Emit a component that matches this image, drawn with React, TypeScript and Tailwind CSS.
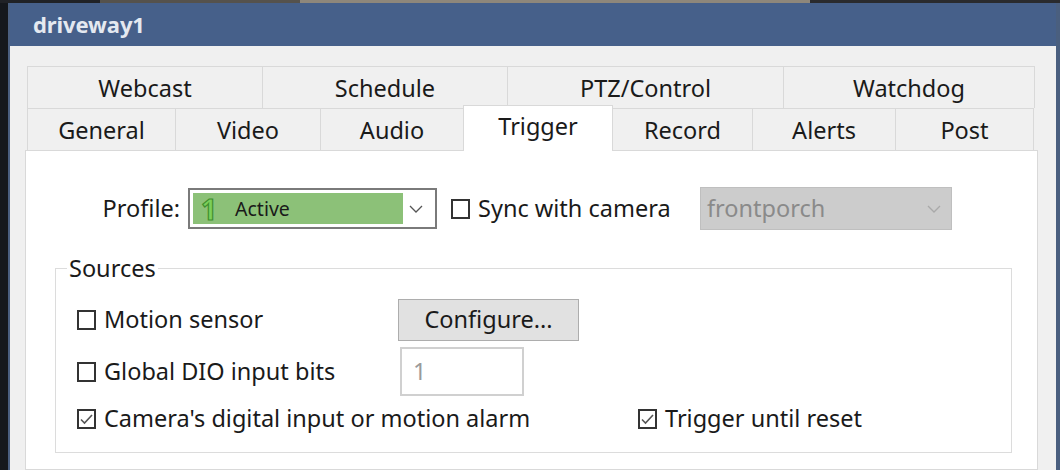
import React from "react";

const FONT = { fontFamily: '"Noto Sans", "Open Sans", sans-serif' };

function Check({ checked }: { checked?: boolean }) {
  return (
    <div className="w-[19px] h-[20px] border-2 border-[#333333] bg-white flex items-center justify-center shrink-0">
      {checked && (
        <svg width="15" height="15" viewBox="0 0 15 15">
          <polyline points="2,7.5 5.5,11 13,3" fill="none" stroke="#555555" strokeWidth="1.6" />
        </svg>
      )}
    </div>
  );
}

function Chevron({ color }: { color: string }) {
  return (
    <svg width="14" height="8" viewBox="0 0 14 8">
      <polyline points="1,1 7,7 13,1" fill="none" stroke={color} strokeWidth="1.3" />
    </svg>
  );
}

const row1 = [
  { label: "Webcast", w: "w-[235px]" },
  { label: "Schedule", w: "w-[245px]" },
  { label: "PTZ/Control", w: "w-[276px]" },
  { label: "Watchdog", w: "w-[252px]" },
];

export default function App() {
  return (
    <div className="w-[1060px] h-[470px] overflow-hidden bg-[#1a1d21] flex flex-col text-[#1a1a1a]" style={FONT}>
      <div className="h-[3px] flex shrink-0">
        <div className="w-[100px] bg-[#202226]" />
        <div className="w-[200px] bg-[#55524d]" />
        <div className="w-[510px] bg-[#8e877b]" />
        <div className="flex-1 bg-[#2a2b2e]" />
      </div>
      <div className="flex flex-1 min-h-0">
        <div className="w-[8px] bg-[#15181c] shrink-0" />
        <div className="flex-1 flex flex-col border-l-2 border-r-4 border-[#4a5f7f] bg-[#f0f0f0] min-w-0">
          <div className="h-[43px] bg-[#46608a] pl-[23px] flex items-center shrink-0">
            <span className="text-[22px] font-bold text-[#e4e9f0] leading-none pb-[1px] tracking-[-0.1px]">driveway1</span>
          </div>
          <div className="flex-1 flex flex-col pt-[20px] pl-[15px] min-h-0">
            {/* tabs */}
            <div className="ml-[2px] flex flex-col text-[23.5px] shrink-0">
              <div className="flex h-[42px]">
                {row1.map((t, i) => (
                  <div
                    key={t.label}
                    className={`${t.w} border-t border-l border-[#d9d9d9] flex items-center justify-center pt-[3px] ${i === row1.length - 1 ? "border-r" : ""}`}
                  >
                    {t.label}
                  </div>
                ))}
              </div>
              <div className="flex h-[42px] items-end">
                <div className="w-[148px] h-[42px] border-t border-l border-[#d9d9d9] flex items-center justify-center pt-[3px]">General</div>
                <div className="w-[145px] h-[42px] border-t border-l border-[#d9d9d9] flex items-center justify-center pt-[3px]">Video</div>
                <div className="w-[143px] h-[42px] border-t border-l border-[#d9d9d9] flex items-center justify-center pt-[3px]">Audio</div>
                <div className="w-[150px] h-[46px] -mb-[1px] relative z-10 bg-white border-t border-x border-[#d9d9d9] flex items-center justify-center pb-[3px]">Trigger</div>
                <div className="w-[139px] h-[42px] border-t border-[#d9d9d9] flex items-center justify-center pt-[3px]">Record</div>
                <div className="w-[143px] h-[42px] border-t border-l border-[#d9d9d9] flex items-center justify-center pt-[3px]">Alerts</div>
                <div className="w-[139px] h-[42px] border-t border-x border-[#d9d9d9] flex items-center justify-center pt-[3px]">Post</div>
              </div>
            </div>
            {/* panel */}
            <div className="w-[1013px] flex-1 bg-white border border-[#d9d9d9] flex flex-col text-[23.5px]">
              <div className="flex items-center h-[43px] mt-[36px] pl-[62px]">
                <div className="w-[92px] text-right mr-[8px]">Profile:</div>
                <div className="w-[249px] h-[41px] border-2 border-[#7a7a7a] bg-white flex items-center pl-[3px] pr-[7px]">
                  <div className="w-[210px] h-[31px] bg-[#8cc178] flex items-center pl-[8px]">
                    <span className="text-[28px] font-bold leading-none text-[#7ccf5a] [-webkit-text-stroke:1.2px_#3f8f2f]">1</span>
                    <span className="ml-[18px] text-[19.5px] leading-none">Active</span>
                  </div>
                  <div className="flex-1 flex justify-center">
                    <Chevron color="#555555" />
                  </div>
                </div>
                <div className="w-[263px] flex items-center pl-[14px]">
                  <Check />
                  <span className="ml-[8px]">Sync with camera</span>
                </div>
                <div className="w-[252px] h-[43px] bg-[#cccccc] border border-[#bfbfbf] flex items-center pl-[6px] pr-[10px]">
                  <span className="flex-1 text-[#8a8a8a]">frontporch</span>
                  <Chevron color="#a9a9a9" />
                </div>
              </div>
              <fieldset className="ml-[29px] w-[957px] mt-[24px] border border-[#dcdcdc] pl-[21px] pt-[17px] pb-[13px]">
                <legend className="-ml-[10px] px-[2px] leading-[28px]">Sources</legend>
                <div className="flex items-center h-[42px]">
                  <div className="w-[321px] flex items-center">
                    <Check />
                    <span className="ml-[8px]">Motion sensor</span>
                  </div>
                  <div className="w-[181px] h-[42px] bg-[#e1e1e1] border border-[#adadad] flex items-center justify-center">Configure...</div>
                </div>
                <div className="flex items-center h-[49px] mt-[6px]">
                  <div className="w-[323px] flex items-center">
                    <Check />
                    <span className="ml-[8px]">Global DIO input bits</span>
                  </div>
                  <div className="w-[124px] h-[49px] bg-white border-2 border-[#d0d0d0] flex items-center pl-[11px] text-[#9a9a9a]">1</div>
                </div>
                <div className="flex items-center h-[40px] mt-[3px]">
                  <div className="w-[561px] flex items-center">
                    <Check checked />
                    <span className="ml-[8px]">Camera's digital input or motion alarm</span>
                  </div>
                  <div className="flex items-center">
                    <Check checked />
                    <span className="ml-[8px]">Trigger until reset</span>
                  </div>
                </div>
              </fieldset>
            </div>
          </div>
        </div>
      </div>
    </div>
  );
}
